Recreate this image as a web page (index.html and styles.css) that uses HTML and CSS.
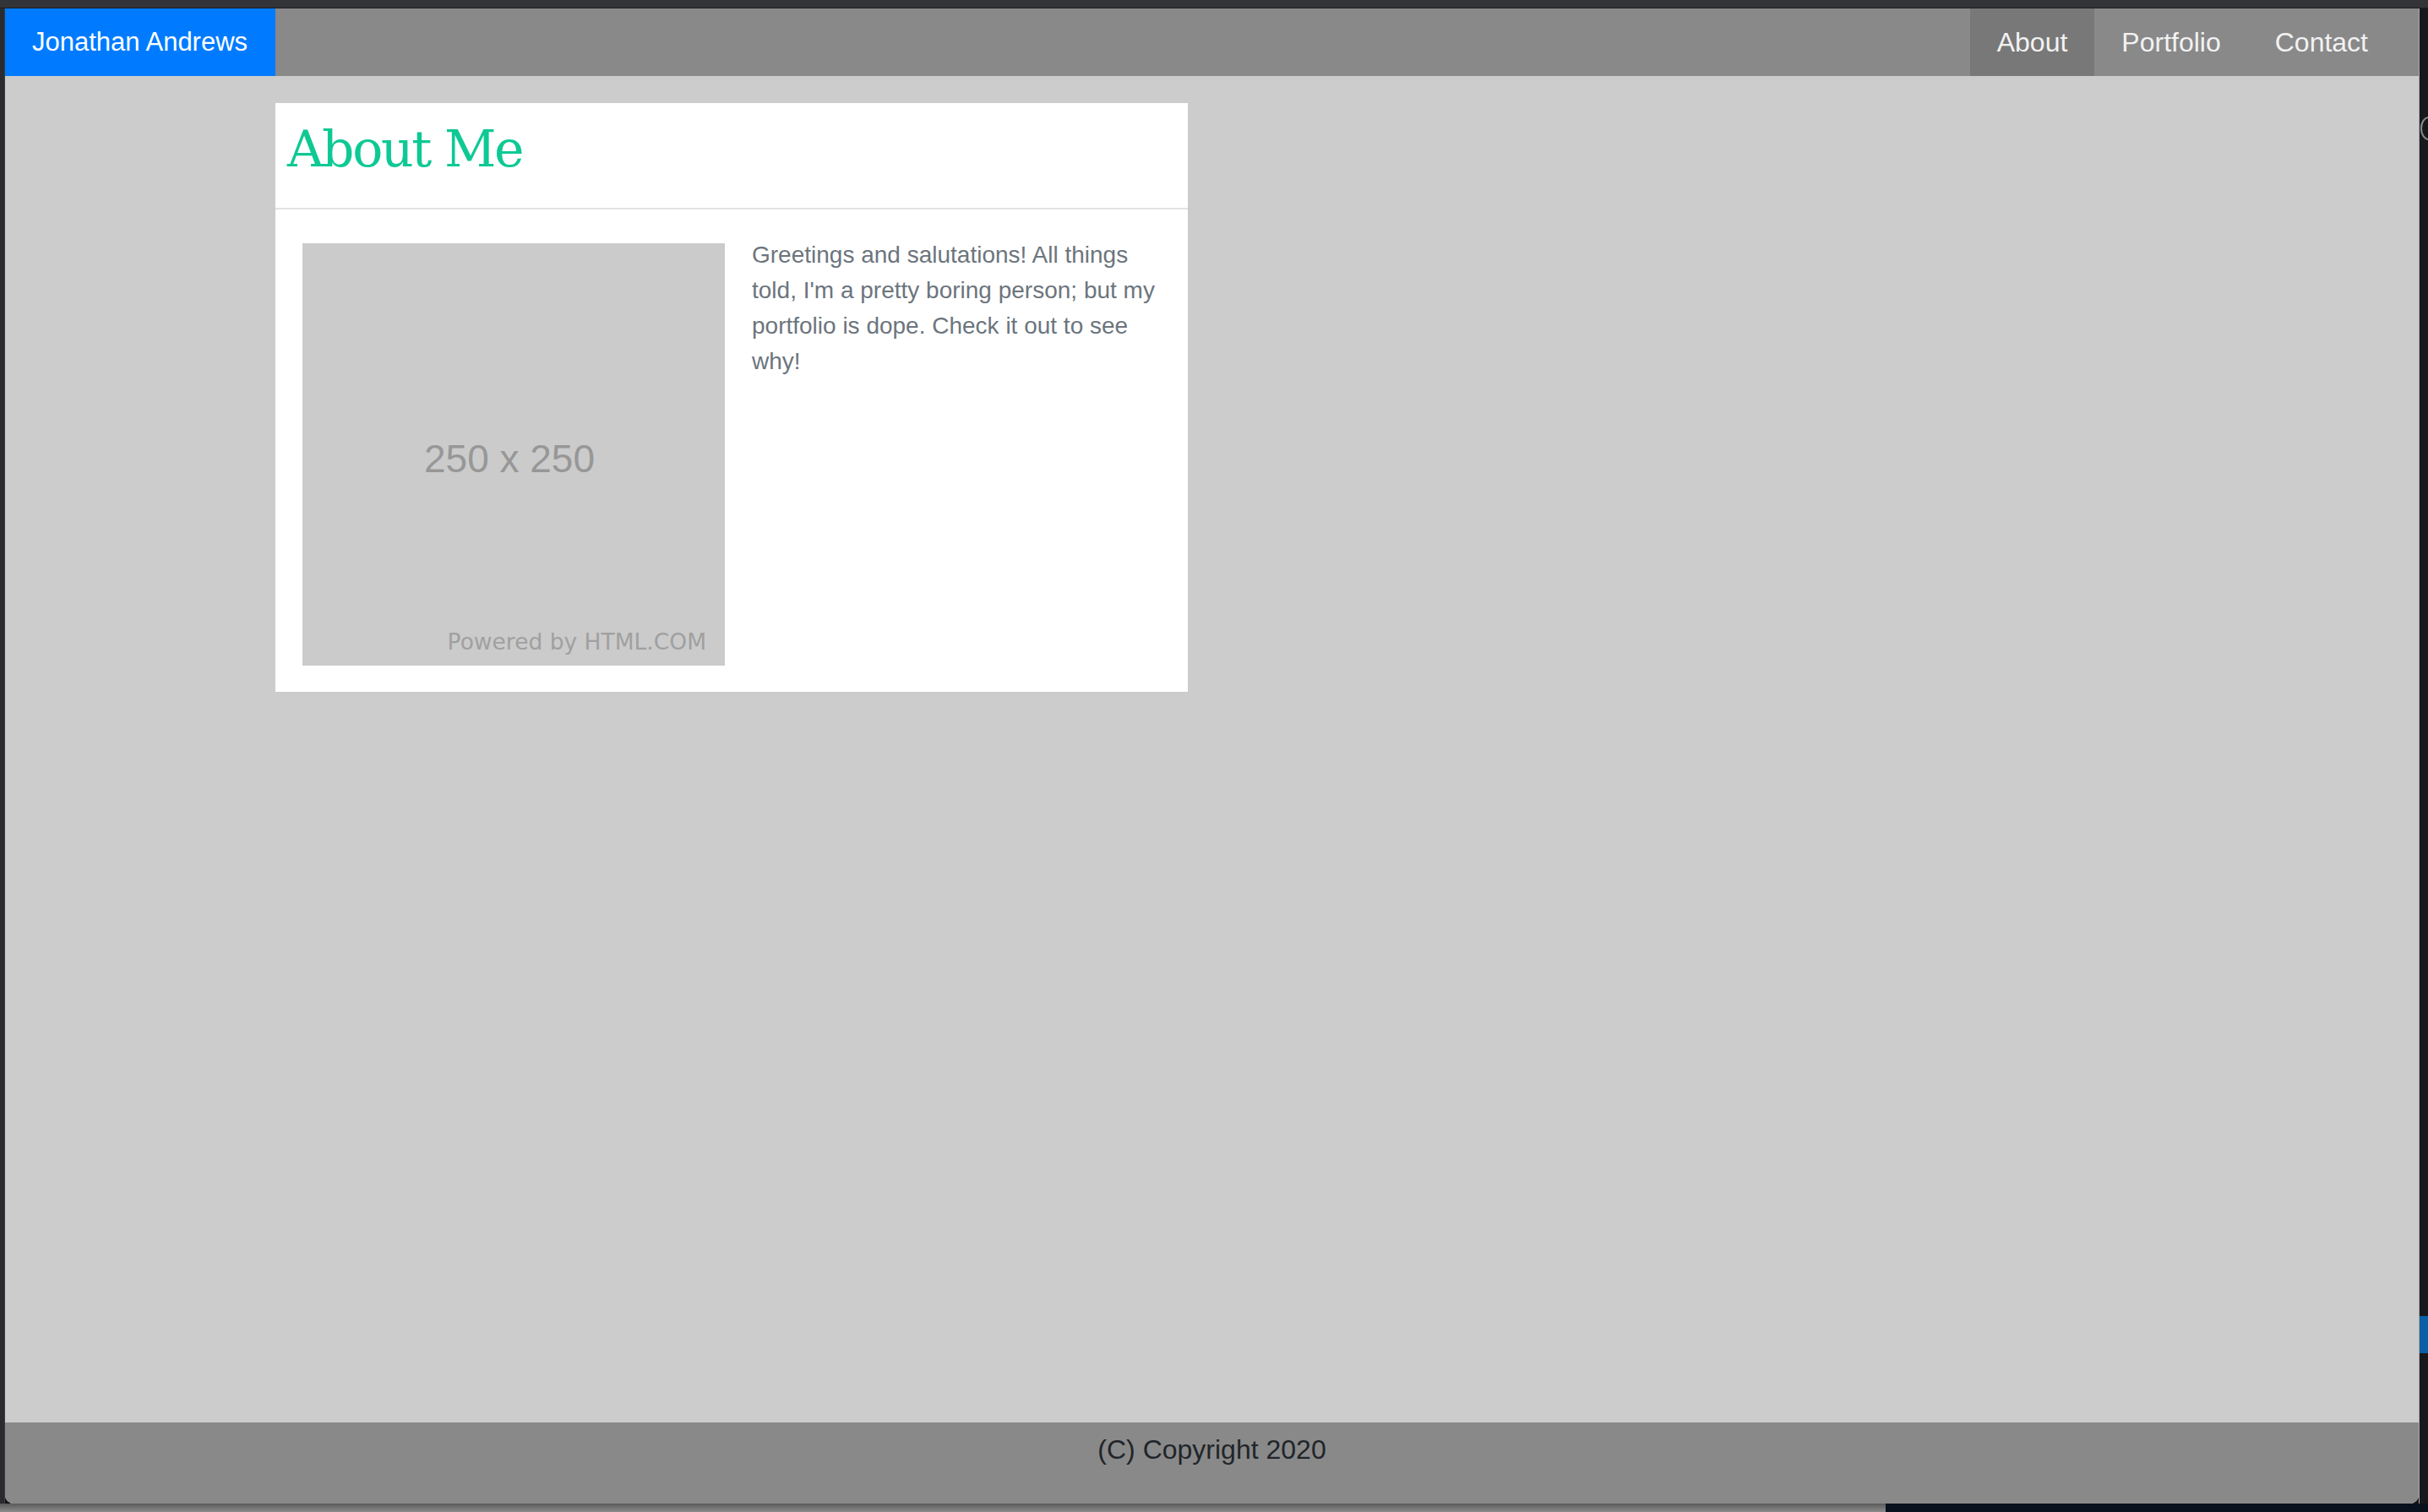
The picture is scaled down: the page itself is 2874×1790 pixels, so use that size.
FILE: index.html
```html
<!DOCTYPE html>
<html lang="en">
<head>
<meta charset="utf-8">
<title>Jonathan Andrews</title>
<link rel="stylesheet" href="styles.css">
</head>
<body>
<div class="screen">
  <div class="topbar"></div>
  <div class="middle">
    <div class="left-edge"></div>
    <div class="window">
      <nav class="navbar">
        <a class="brand" href="#">Jonathan Andrews</a>
        <ul class="nav-links">
          <li class="nav-item active"><a href="#">About</a></li>
          <li class="nav-item"><a href="#">Portfolio</a></li>
          <li class="nav-item"><a href="#">Contact</a></li>
        </ul>
      </nav>
      <main class="content">
        <section class="card">
          <header class="card-header">
            <h2 class="card-title">About Me</h2>
          </header>
          <div class="card-body">
            <div class="placeholder">
              <span class="ph-size">250 x 250</span>
              <span class="ph-credit">Powered by HTML.COM</span>
            </div>
            <p class="bio">Greetings and salutations! All things told, I'm a pretty boring person; but my portfolio is dope. Check it out to see why!</p>
          </div>
        </section>
      </main>
      <footer class="footer">(C) Copyright 2020</footer>
    </div>
    <div class="right-edge">
      <div class="edge-icon"></div>
      <div class="edge-blue"></div>
    </div>
  </div>
  <div class="bottombar">
    <div class="bottom-gray"></div>
    <div class="bottom-dark"></div>
  </div>
</div>
</body>
</html>
```

FILE: styles.css
```css
* {
  box-sizing: border-box;
}

html, body {
  margin: 0;
  padding: 0;
}

body {
  background: #141518;
  font-family: "Liberation Sans", Arial, sans-serif;
}

.screen {
  width: 2874px;
  height: 1790px;
  display: grid;
  grid-template-rows: 10px 1770px 10px;
  overflow: hidden;
}

.topbar {
  background: #333438;
  border-bottom: 1px solid #1c1d20;
}

.middle {
  display: grid;
  grid-template-columns: 6px 2857px 11px;
}

.left-edge {
  background: #2a2b2e;
  border-right: 1px solid #3c3d40;
}

.right-edge {
  background: #17181b;
  border-left: 1px solid #a8a8a8;
  display: flex;
  flex-direction: column;
  padding-top: 128px;
}

.edge-icon {
  width: 20px;
  height: 28px;
  border: 2px solid #8a8a8a;
  border-radius: 50%;
  margin-left: 1px;
}

.edge-blue {
  margin-top: 1392px;
  height: 44px;
  background: #0a5fa5;
}

.window {
  display: flex;
  flex-direction: column;
  background: #cccccc;
  border-radius: 0 0 10px 10px;
  overflow: hidden;
}

/* NAVBAR */
.navbar {
  height: 80px;
  background: #898989;
  display: flex;
  justify-content: space-between;
  align-items: stretch;
  padding-right: 28px;
}

.brand {
  background: #007bff;
  color: #ffffff;
  text-decoration: none;
  font-size: 31px;
  line-height: 48px;
  padding: 16px 32px;
  width: 320px;
  white-space: nowrap;
}

.nav-links {
  list-style: none;
  margin: 0;
  padding: 0;
  display: flex;
}

.nav-item a {
  display: block;
  color: #f2f2f2;
  text-decoration: none;
  font-size: 32px;
  line-height: 48px;
  padding: 16px 32px;
}

.nav-item.active a {
  background: #787878;
}

/* CONTENT */
.content {
  flex: 1;
  padding: 32px 0 0 320px;
}

.card {
  width: 1080px;
  background: #ffffff;
}

.card-header {
  height: 126px;
  border-bottom: 2px solid #e2e2e2;
  padding: 24px 14px 0;
}

.card-title {
  margin: 0;
  font-family: "DejaVu Serif", "Liberation Serif", serif;
  font-weight: normal;
  font-size: 60px;
  line-height: 60px;
  letter-spacing: -2.3px;
  color: #0ec994;
}

.card-body {
  display: flex;
  align-items: flex-start;
  gap: 32px;
  padding: 40px 32px 31px;
}

.placeholder {
  position: relative;
  flex: none;
  width: 500px;
  height: 500px;
  background: #cbcbcb;
  display: flex;
  align-items: center;
  justify-content: center;
}

.ph-size {
  font-family: "Liberation Sans", Arial, sans-serif;
  font-size: 46px;
  color: #979797;
  margin-left: -10px;
  margin-top: 10px;
}

.ph-credit {
  position: absolute;
  right: 22px;
  bottom: 13px;
  font-family: "DejaVu Sans", Verdana, sans-serif;
  font-size: 26.5px;
  color: #a0a0a0;
  white-space: nowrap;
}

.bio {
  margin: -7px 0 0;
  font-size: 28px;
  line-height: 42px;
  color: #6c757d;
}

/* FOOTER */
.footer {
  height: 96px;
  background: #898989;
  color: #212529;
  font-size: 32px;
  line-height: 48px;
  text-align: center;
  padding-top: 8px;
}

/* BOTTOM STRIP */
.bottombar {
  display: grid;
  grid-template-columns: 2232px 1fr;
}

.bottom-gray {
  background: linear-gradient(#5a5a5a, #8c8c8c);
}

.bottom-dark {
  background: #08111d;
}
```
